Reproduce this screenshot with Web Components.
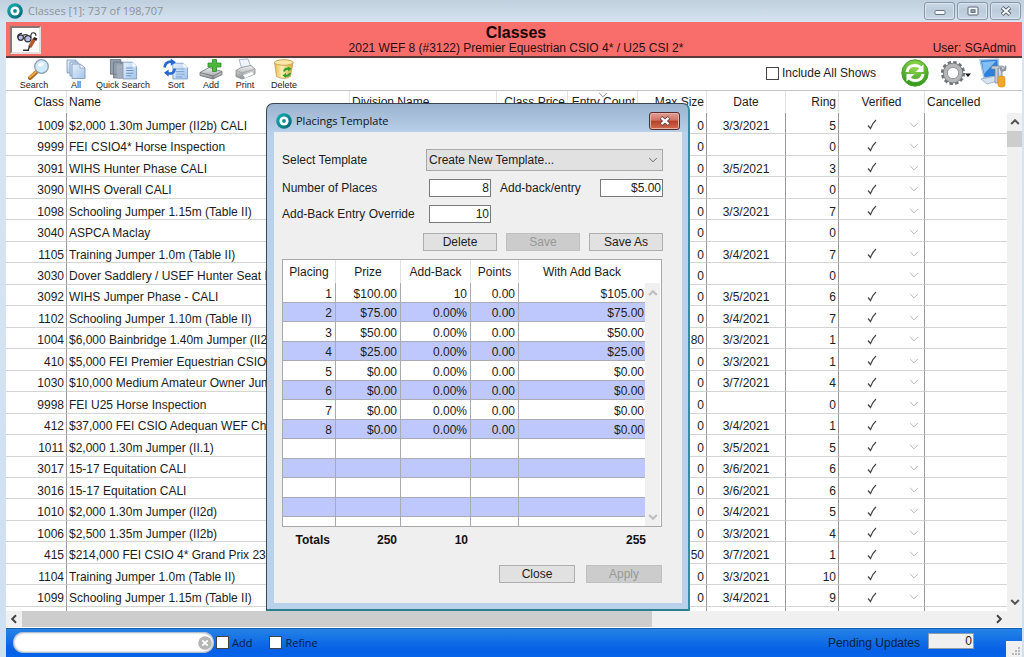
<!DOCTYPE html>
<html lang="en">
<head>
<meta charset="utf-8">
<title>Classes</title>
<style>
  html, body { margin: 0; height: 100%; }
  body { font: 12px/14px "Liberation Sans", Arial, sans-serif; color: #1c1c1c; overflow: hidden; }
</style>
</head>
<body>
<app-window>
  <title-bar slot="title">Classes [1]: 737 of 198,707</title-bar>
  <show-banner>
    <span slot="heading">Classes</span>
    <span slot="show">2021 WEF 8 (#3122) Premier Equestrian CSIO 4* / U25 CSI 2*</span>
    <span slot="user">User: SGAdmin</span>
  </show-banner>
  <tool-bar></tool-bar>
  <class-list></class-list>
  <status-bar></status-bar>
  <placings-dialog slot="dialog"></placings-dialog>
</app-window>

<script>
const define = (name, html, setup) => customElements.define(name, class extends HTMLElement {
  constructor() {
    super();
    const template = document.createElement('template');
    template.innerHTML = html;
    this.attachShadow({ mode: 'open' }).append(template.content.cloneNode(true));
    if (setup) setup(this.shadowRoot, this);
  }
});

define('app-logo', `
<style>:host { display: block; width: 16px; height: 16px; } svg { display: block; }</style>
<svg width="16" height="16" viewBox="0 0 16 16" aria-hidden="true">
  <defs><linearGradient id="g" x1="0" y1="0" x2="1" y2="1"><stop offset="0" stop-color="#12b3b3"/><stop offset="1" stop-color="#07606f"/></linearGradient></defs>
  <circle cx="8" cy="8" r="7.8" fill="url(#g)"/><circle cx="8" cy="8" r="4.6" fill="#fff"/><circle cx="8" cy="8" r="1.9" fill="#128d97"/>
</svg>`);

define('chevron-icon', `
<style>
  :host { display: inline-block; width: 10px; height: 6px; }
  :host([dir=up]) svg { transform: rotate(180deg); }
  :host([dir=left]) svg { transform: rotate(90deg); }
  :host([dir=right]) svg { transform: rotate(-90deg); }
  svg { display: block; }
  path { stroke-width: var(--w, 1); }
</style>
<svg width="10" height="6" viewBox="0 0 10 6" aria-hidden="true"><path d="M1.2 1 5 4.8 8.8 1" fill="none" stroke="currentColor"/></svg>`);

define('app-window', `
<style>
  :host { display: flex; flex-direction: column; height: 100vh; background: linear-gradient(#d9e5f1, #cfe0f2); }
  main { flex: 1; min-height: 0; display: flex; flex-direction: column; margin: 0 2px 0 6px; background: #fff; }
</style>
<slot name="title"></slot>
<main><slot></slot></main>
<slot name="dialog"></slot>`);

define('title-bar', `
<style>
  :host { display: flex; align-items: center; height: 22px; padding: 0 3px 0 7px; gap: 5px;
    background: linear-gradient(#c0cfdd, #d6e4f1); color: #8f9296; font: 12px/18px "Open Sans", "Noto Sans", sans-serif; box-sizing: border-box; }
  span { flex: 1; font-size: 11px; }
  nav { display: flex; gap: 2px; }
  button { width: 31px; height: 18px; padding: 0; display: grid; place-items: center; border: 1px solid #8795a5; border-radius: 3px;
    background: linear-gradient(#c9d7e5, #bccbda 50%, #c9d7e5); box-shadow: inset 0 0 0 1px #dbe6f0; }
</style>
<app-logo></app-logo><span><slot></slot></span>
<nav>
  <button aria-label="Minimize"><svg width="12" height="10" viewBox="0 0 12 10"><rect x="1" y="4.5" width="10" height="4" rx="1" fill="#f4f7fa" stroke="#6b7480"/></svg></button>
  <button aria-label="Restore"><svg width="12" height="10" viewBox="0 0 12 10"><rect x="1" y="1" width="10" height="8" rx="1" fill="#f4f7fa" stroke="#5c6570"/><rect x="4" y="3.8" width="4" height="2.6" fill="#9fb0c2" stroke="#5c6570"/></svg></button>
  <button aria-label="Close"><svg width="12" height="10" viewBox="0 0 12 10"><path d="M2 1.5 10 8.5M10 1.5 2 8.5" stroke="#5c6570" stroke-width="4"/><path d="M2.4 1.8 9.6 8.2M9.6 1.8 2.4 8.2" stroke="#f4f7fa" stroke-width="2"/></svg></button>
</nav>`);

define('show-banner', `
<style>
  :host { display: grid; grid-template-columns: 152px 1fr 148px; align-items: end; height: 36px; box-sizing: border-box;
    background: #f96e6b; border-bottom: 2px solid #5d3a3a; }
  .icon { width: 31px; height: 28px; margin: 0 0 2px 4px; box-sizing: border-box; padding: 0; border: 2px solid #8b7474; border-right-color: #e6dede; border-bottom-color: #e6dede; background: #fff; }
  .icon svg { display: block; }
  .mid { text-align: center; padding-bottom: 1px; color: #2a0d0d; }
  h1 { margin: 0; font: bold 16px/16px "Liberation Sans", Arial, sans-serif; color: #170404; }
  .user { text-align: right; padding: 0 6px 1px 0; color: #2a0d0d; }
</style>
<button class="icon" aria-label="Class details"><svg width="27" height="24" viewBox="2 1 22 20">
  <g fill="none" stroke="#333" stroke-width="1"><circle cx="9" cy="9" r="2.3" fill="#b9bfe6"/><circle cx="15" cy="10" r="2.6" fill="#b9bfe6"/><path d="M6.5 9Q6 6 10 5.5M11.500 9l1 .5M17.500 9Q17 4.500 20 5q2 .5 1.500 2.500M11 7q2-1 4 0"/></g>
  <path d="m20.500 10-4 7" stroke="#b5562e" stroke-width="3"/><path d="m21.500 9-.8 2" stroke="#222" stroke-width="3"/><path d="m16.500 16-1.300 3.500M11 19.500h5" stroke="#333" stroke-width="1.200"/>
</svg></button>
<div class="mid"><h1><slot name="heading"></slot></h1><slot name="show"></slot></div>
<div class="user"><slot name="user"></slot></div>`);

define('tool-button', `
<style>
  :host { display: block; }
  button { display: flex; flex-direction: column; align-items: center; width: 100%; border: 0; padding: 0; background: none; color: #222;
    font: 9px/10px "Liberation Sans", Arial, sans-serif; white-space: nowrap; }
</style>
<button><slot name="icon"></slot><span><slot></slot></span></button>`);

define('check-field', `
<style>
  :host { display: block; }
  label { display: flex; align-items: center; gap: var(--gap, 3px); }
  input { appearance: none; margin: 0; width: 13px; height: 13px; border: 1px solid #444; background: #fff; }
</style>
<label><input type="checkbox"><slot></slot></label>`);

define('tool-bar', `
<style>
  :host { display: flex; align-items: center; height: 33px; box-sizing: border-box; border-bottom: 1px solid #c4c4c4; background: #fff; }
  .tools { flex: 1; display: grid; grid-template-columns: 56px 28px 66px 40px 30px 38px 40px; align-self: start; }
  svg { display: block; }
  .right { display: flex; align-items: center; padding-right: 15px; margin-top: -2px; }
  .right button { border: 0; padding: 0; background: none; }
  check-field { margin-right: 25px; }
  .refresh { margin-right: 12px; }
  .gear { margin-right: 8px; }
</style>
<svg width="0" height="0" style="position:absolute"><defs>
  <linearGradient id="pg" x1="0" y1="0" x2="1" y2="1"><stop offset="0" stop-color="#e6f1fc"/><stop offset="1" stop-color="#a3c4ea"/></linearGradient>
  <linearGradient id="gr" x1="0" y1="0" x2="0" y2="1"><stop offset="0" stop-color="#f2f2f2"/><stop offset="1" stop-color="#8c9097"/></linearGradient>
  <linearGradient id="bin" x1="0" y1="0" x2="1" y2="0"><stop offset="0" stop-color="#e9b94a"/><stop offset=".4" stop-color="#fbeeb4"/><stop offset="1" stop-color="#dba93c"/></linearGradient>
</defs></svg>
<div class="tools">
  <tool-button><svg slot="icon" width="32" height="22" viewBox="0 0 32 21"><path d="m20 12-8 7.500" stroke="#a8691c" stroke-width="4" stroke-linecap="round"/><path d="m19.500 12-7.500 6.500" stroke="#eda844" stroke-width="2" stroke-linecap="round"/><circle cx="23.500" cy="8" r="6.800" fill="#cfeafb" stroke="#8d9fb1" stroke-width="1.300"/><path d="M19.500 7.500q1-3.500 5-3.500l2 1q-2 4-7 2.500Z" fill="#fff"/></svg>Search</tool-button>
  <tool-button><svg slot="icon" width="24" height="22" viewBox="0 0 24 21"><g fill="url(#pg)" stroke="#7790b5" stroke-width=".8"><path d="M3 1.500h9v13H3z"/><path d="M6 3.500h8v14H6z"/><path d="M8 5.500h8l5 4v10.500H8z"/></g><path d="m16 5.500 5 4h-5Z" fill="#fff" stroke="#7790b5" stroke-width=".6"/></svg>All</tool-button>
  <tool-button><svg slot="icon" width="32" height="22" viewBox="2 0 30 21"><g fill="#929eac" stroke="#6c7887" stroke-width=".8"><path d="M5 1.500h10v14H5zM8 4h9v15H8z"/></g><path d="M11 6h7v14h-7z" fill="#a3adba"/><path d="M17 4h9l4 4v12H17z" fill="url(#pg)" stroke="#7d95b6" stroke-width=".8"/><path d="m26 4 4 4h-4Z" fill="#fff"/><path d="M20 9.500h6M20 12h7M20 14.500h7M20 17h5" stroke="#6d93c4"/></svg>Quick Search</tool-button>
  <tool-button><svg slot="icon" width="32" height="22" viewBox="2 0 30 21"><path d="M14 5h10l4 4v11H14z" fill="url(#pg)" stroke="#7d9ac4" stroke-width=".8"/><path d="m24 5 4 4h-4Z" fill="#fff"/><path d="M17 10.500h8M17 13h8M17 15.500h8M17 18h6" stroke="#7fa6da"/><g fill="none" stroke="#2767d2" stroke-width="2.500"><path d="M6 9Q7 3 13 3.500M16 10q-1 6-7 4.500"/></g><path d="m12 .500 5 3.500-5 3.500ZM10 11v7l-4.500-4Z" fill="#2767d2"/></svg>Sort</tool-button>
  <tool-button><svg slot="icon" width="26" height="22" viewBox="0 0 26 21"><path d="m2 14 9-5 13 4v3l-9 4.500L2 17Z" fill="url(#gr)" stroke="#686c72" stroke-width=".8"/><path d="m2 14 13 3.500 9-4.500M15 17.500v3" fill="none" stroke="#686c72" stroke-width=".8"/><path d="M14.500 1h4v3.500H23v4h-4.500V13h-4V8.500H10v-4h4.500Z" fill="#4cb93c" stroke="#2e8a28" stroke-width=".8"/></svg>Add</tool-button>
  <tool-button><svg slot="icon" width="24" height="22" viewBox="0 0 24 21"><path d="m6 1 9-.5 3 8-9 2Z" fill="#edf4fb" stroke="#9aa6b4" stroke-width=".8"/><path d="m3 12 5-3 10-2 4 3.500v5L9 20.500 3 18Z" fill="url(#gr)" stroke="#85898f" stroke-width=".8"/><path d="m3 12 6 2.500 13-4M9 14.500v6" fill="none" stroke="#9b9fa5" stroke-width=".8"/><path d="m10 16.500 9-3 2 2-9 4Z" fill="#fff"/></svg>Print</tool-button>
  <tool-button><svg slot="icon" width="24" height="22" viewBox="0 0 24 21"><path d="m2.500 4 2 14q7 4 14 0l2.500-14Z" fill="url(#bin)" stroke="#c19a45" stroke-width=".7"/><ellipse cx="11.800" cy="4" rx="9.300" ry="2.800" fill="#f8e7a8" stroke="#cba44c"/><g fill="none" stroke="#2fa02c" stroke-width="2"><path d="M12 13q1-3.500 4.500-2.500M18 14.500q-1 3.500-4.500 2.500"/></g><path d="m15.500 8 4 2-3 3ZM14 14.500v5l-3.500-2.500Z" fill="#2fa02c"/></svg>Delete</tool-button>
</div>
<div class="right">
  <check-field>Include All Shows</check-field>
  <button class="refresh" aria-label="Refresh"><svg width="28" height="28" viewBox="0 0 28 28"><defs><radialGradient id="rf" cx=".5" cy=".25" r=".8"><stop offset="0" stop-color="#9cdc53"/><stop offset="1" stop-color="#259018"/></radialGradient></defs><circle cx="14" cy="14" r="13.200" fill="url(#rf)" stroke="#4da62d"/><g fill="none" stroke="#fff" stroke-width="3"><path d="M6 13q1-6.500 8-6.500 4 0 6 3M22 15q-1 6.500-8 6.500-4 0-6-3"/></g><path d="M22.500 5.500v7.500h-8ZM5.500 22.500V15h8Z" fill="#fff"/></svg></button>
  <button class="gear" aria-label="Settings"><svg width="30" height="28" viewBox="0 0 30 28"><circle cx="12" cy="14" r="10.800" fill="none" stroke="#6f7274" stroke-width="2.600" stroke-dasharray="3.400 2.250"/><circle cx="12" cy="14" r="7.800" fill="none" stroke="#77797b" stroke-width="5"/><circle cx="12" cy="14" r="7.600" fill="none" stroke="#b4b6b8" stroke-width="3.600"/><path d="M24 14.500h6l-3 3.500Z" fill="#111"/></svg></button>
  <button aria-label="Workstation tools"><svg width="28" height="30" viewBox="0 0 28 30"><path d="m1 2 18-1 1 17-15 2Z" fill="#2d7fdc" stroke="#a9c4de" stroke-width="1.500"/><path d="m3 4 14-1-12 13Z" fill="#82bdf3"/><path d="m2 21 15-3 5 4-14 4Z" fill="#d7e4f0" stroke="#92abc4" stroke-width=".8"/><path d="M13 8h11l2 3-2 1-2-2h-3v15h-3V11h-4Z" fill="#c7cdd4" stroke="#78828d" stroke-width=".7"/><path d="M22 9q-1 3 1 4l3-1q1-3 0-4" fill="none" stroke="#8d959f" stroke-width="2"/><rect x="19" y="18" width="7" height="11" rx="2.500" fill="#f1a62e" stroke="#d08619" stroke-width=".6"/><path d="M22.500 13v5" stroke="#9ba3ab" stroke-width="2"/></svg></button>
</div>`);

define('v-scroll', `
<style>
  :host { display: flex; flex-direction: column; align-items: center; background: #f0f0f0; color: #555; box-sizing: border-box; padding: 6px 0; }
  i { display: block; width: 100%; height: 16px; margin-top: 6px; background: #cdcdcd; }
  :host([idle]) i { visibility: hidden; }
  .sp { flex: 1; }
</style>
<chevron-icon dir="up"></chevron-icon><i></i><div class="sp"></div><chevron-icon></chevron-icon>`);

const classes = [
  [1009, '$2,000 1.30m Jumper (II2b) CALI', 0, '3/3/2021', 5, 1],
  [9999, 'FEI CSIO4* Horse Inspection', 0, '', 0, 1],
  [3091, 'WIHS Hunter Phase CALI', 0, '3/5/2021', 3, 1],
  [3090, 'WIHS Overall CALI', 0, '', 0, 1],
  [1098, 'Schooling Jumper 1.15m (Table II)', 0, '3/3/2021', 7, 1],
  [3040, 'ASPCA Maclay', 0, '', 0, 0],
  [1105, 'Training Jumper 1.0m (Table II)', 0, '3/4/2021', 7, 1],
  [3030, 'Dover Saddlery / USEF Hunter Seat M', 0, '', 0, 0],
  [3092, 'WIHS Jumper Phase - CALI', 0, '3/5/2021', 6, 1],
  [1102, 'Schooling Jumper 1.10m (Table II)', 0, '3/4/2021', 7, 1],
  [1004, '$6,000 Bainbridge 1.40m Jumper (II2', 80, '3/3/2021', 1, 1],
  [410, '$5,000 FEI Premier Equestrian CSIO', 0, '3/3/2021', 1, 1],
  [1030, '$10,000 Medium Amateur Owner Jum', 0, '3/7/2021', 4, 1],
  [9998, 'FEI U25 Horse Inspection', 0, '', 0, 1],
  [412, '$37,000 FEI CSIO Adequan WEF Cha', 0, '3/4/2021', 1, 1],
  [1011, '$2,000 1.30m Jumper (II.1)', 0, '3/5/2021', 5, 1],
  [3017, '15-17 Equitation CALI', 0, '3/6/2021', 6, 1],
  [3016, '15-17 Equitation CALI', 0, '3/6/2021', 6, 1],
  [1010, '$2,000 1.30m Jumper (II2d)', 0, '3/4/2021', 5, 1],
  [1006, '$2,500 1.35m Jumper (II2b)', 0, '3/3/2021', 4, 1],
  [415, '$214,000 FEI CSIO 4* Grand Prix 238', 50, '3/7/2021', 1, 1],
  [1104, 'Training Jumper 1.0m (Table II)', 0, '3/3/2021', 10, 1],
  [1099, 'Schooling Jumper 1.15m (Table II)', 0, '3/4/2021', 9, 1],
];

define('class-list', `
<style>
  :host { flex: 1; min-height: 0; display: grid; grid-template: 1fr 17px / 1fr 15px; }
  table { width: 100%; height: 100%; table-layout: fixed; border-collapse: separate; border-spacing: 0; }
  th, td { padding: 0 2px; overflow: hidden; white-space: nowrap; text-align: left; font-weight: normal; box-sizing: border-box; line-height: 14px; }
  th { height: 22px; border-right: 1px solid #e2e2e2; }
  td { padding-top: 5px; border-right: 1px solid #999; border-bottom: 1px solid #d4d4d4; }
  th:last-child, td:last-child { border-right: 0; }
  tfoot td { height: 4px; padding: 0; border-bottom: 0; }
  .r { text-align: right; } .c { text-align: center; }
  .v { display: flex; align-items: center; justify-content: flex-end; gap: 32px; padding-right: 3px; color: #b5b5b5; margin-top: -2px; }
  .sorted { position: relative; }
  .sorted chevron-icon { position: absolute; top: 1px; right: 29px; color: #888; }
  v-scroll { margin-top: 22px; --w: 2; }
  .h { grid-column: 1 / -1; display: flex; align-items: center; background: #f0f0f0; color: #444; --w: 2; margin-bottom: 1px; }
  .h chevron-icon { margin: 0 3px; }
  .h i { flex: none; width: 62%; height: 100%; background: #cdcdcd; }
  .h .sp { flex: 1; }
  .h chevron-icon:last-child { margin-right: 18px; }
</style>
<table>
  <colgroup><col style="width:61px"><col style="width:283px"><col><col style="width:71px"><col style="width:70px"><col style="width:69px"><col style="width:79px"><col style="width:53px"><col style="width:86px"><col style="width:82px"></colgroup>
  <thead><tr><th class="r">Class</th><th>Name</th><th>Division Name</th><th class="r">Class Price</th><th class="r sorted">Entry Count<chevron-icon></chevron-icon></th><th class="r">Max Size</th><th class="c">Date</th><th class="r">Ring</th><th class="c">Verified</th><th>Cancelled</th></tr></thead>
  <tbody></tbody>
  <tfoot><tr><td></td><td></td><td></td><td></td><td></td><td></td><td></td><td></td><td></td><td></td></tr></tfoot>
</table>
<v-scroll></v-scroll>
<div class="h"><chevron-icon dir="left"></chevron-icon><i></i><div class="sp"></div><chevron-icon dir="right"></chevron-icon></div>`,
root => {
  const tick = '<svg width="10" height="11" viewBox="0 0 10 11" role="img" aria-label="Yes"><path d="M1 6.500 3.500 9.500Q5.500 4 9 1" fill="none" stroke="#444" stroke-width="1.200"/></svg>';
  root.querySelector('tbody').innerHTML = classes.map(([no, name, size, date, ring, ok]) =>
    `<tr><td class="r">${no}</td><td>${name}</td><td></td><td></td><td></td><td class="r">${size}</td><td class="c">${date}</td><td class="r">${ring}</td><td><div class="v">${ok ? tick : ''}<chevron-icon></chevron-icon></div></td><td></td></tr>`).join('');
});

define('status-bar', `
<style>
  :host { display: flex; align-items: center; height: 29px; padding-left: 7px; background: linear-gradient(#2684e6, #0560e6 75%, #0464ea); color: #04203f;
    font: 12px/16px "Open Sans", "Noto Sans", sans-serif; box-shadow: inset 0 1px #1a60b0; }
  .search { display: flex; align-items: center; width: 201px; height: 21px; box-sizing: border-box; border-radius: 11px; background: #fff; padding: 0 2px 0 10px; box-shadow: inset 0 0 2px 1px #9ab; margin-right: 2px; }
  .search input { flex: 1; min-width: 0; border: 0; outline: 0; background: none; padding: 0; }
  .search button { border: 0; padding: 0; background: none; height: 14px; }
  svg { display: block; }
  check-field { margin-right: 17px; font-size: 11px; --gap: 3px; }
  .pending { margin-left: auto; display: flex; align-items: center; gap: 8px; font: 12px/14px "Liberation Sans", Arial, sans-serif; }
  .pending input { width: 46px; height: 16px; box-sizing: border-box; border: 1px solid #8c9cae; background: #f0f0f0; padding: 0 1px; text-align: right; font: inherit; color: #222; margin-bottom: 4px; }
  .grip { align-self: end; width: 16px; height: 16px; margin-left: 32px; background: #f0f0f0; }
</style>
<div class="search"><input type="text" aria-label="Search classes"><button aria-label="Clear"><svg width="14" height="14" viewBox="0 0 14 14"><circle cx="7" cy="7" r="6.800" fill="#b5b5b5"/><path d="m4.300 4.300 5.400 5.400m0-5.400L4.300 9.700" stroke="#fff" stroke-width="1.800"/></svg></button></div>
<check-field>Add</check-field><check-field>Refine</check-field>
<label class="pending">Pending Updates <input type="text" value="0" readonly></label>
<svg class="grip" viewBox="0 0 16 16" aria-hidden="true"><path d="M12 6h2v2h-2zM9 9h2v2H9zM12 9h2v2h-2zM6 12h2v2H6zM9 12h2v2H9zM12 12h2v2h-2z" fill="#b8b8b8"/></svg>`);

const placings = [
  ['$100.00', '10', '0.00', '$105.00'], ['$75.00', '0.00%', '0.00', '$75.00'],
  ['$50.00', '0.00%', '0.00', '$50.00'], ['$25.00', '0.00%', '0.00', '$25.00'],
  ['$0.00', '0.00%', '0.00', '$0.00'], ['$0.00', '0.00%', '0.00', '$0.00'],
  ['$0.00', '0.00%', '0.00', '$0.00'], ['$0.00', '0.00%', '0.00', '$0.00'],
];

define('placings-table', `
<style>
  :host { display: flex; height: 268px; box-sizing: border-box; border: 1px solid #a9a9a9; background: #fff; }
  table { flex: 1; height: 100%; table-layout: fixed; border-collapse: separate; border-spacing: 0; }
  th, td { box-sizing: border-box; padding: 0 3px; overflow: hidden; white-space: nowrap; line-height: 14px; }
  th { height: 23px; font-weight: normal; border-right: 1px solid #e2e2e2; }
  td { text-align: right; border-right: 1px solid #aaaab4; border-bottom: 1px solid #aaaab4; }
  td:last-child { padding-right: 1px; }
  th:last-child, td:last-child { border-right: 0; }
  tbody td { padding-top: 3px; }
  tbody tr:nth-child(even) td { background: #bfc8fd; }
  tfoot td { height: 9px; padding: 0; border-bottom: 0; }
  v-scroll { margin: 23px 1px 0 0; width: 15px; --w: 2; color: #bdbdbd; padding: 7px 0 6px; }
</style>
<table>
  <colgroup><col style="width:53px"><col style="width:65px"><col style="width:70px"><col style="width:48px"><col></colgroup>
  <thead><tr><th>Placing</th><th>Prize</th><th>Add-Back</th><th>Points</th><th>With Add Back</th></tr></thead>
  <tbody></tbody>
  <tfoot><tr><td></td><td></td><td></td><td></td><td></td></tr></tfoot>
</table>
<v-scroll idle></v-scroll>`,
root => {
  root.querySelector('tbody').innerHTML = Array.from({ length: 12 }, (_, i) => {
    const cells = placings[i] ? [i + 1, ...placings[i]] : Array(5).fill('&nbsp;');
    return `<tr>${cells.map(c => `<td>${c}</td>`).join('')}</tr>`;
  }).join('');
});

define('push-button', `
<style>
  :host { display: block; width: 74px; }
  button { display: block; width: 100%; height: 18px; box-sizing: border-box; padding: 0; border: 1px solid #adadad; background: #e1e1e1; color: #1c1c1c; font: 12px/14px "Liberation Sans", Arial, sans-serif; }
  button:disabled { background: #cccccc; border-color: #c0c0c0; color: #989898; }
</style>
<button><slot></slot></button>`,
(root, host) => { root.querySelector('button').disabled = host.hasAttribute('disabled'); });

define('placings-dialog', `
<style>
  :host { position: absolute; left: 266px; top: 103px; width: 424px; box-sizing: border-box; border: 1px solid #3c4650; border-right: 2px solid #2f8fa3; border-bottom: 2px solid #2c7f90;
    border-radius: 7px 7px 0 0; padding: 0 6px 6px 7px; background: linear-gradient(#9bb3ce, #b9d1ea 30px, #b9d1ea); }
  header { display: flex; align-items: center; gap: 4px; height: 28px; padding: 6px 2px 0; box-sizing: border-box; font: 12px/18px "Open Sans", "Noto Sans", sans-serif; }
  h2 { flex: 1; margin: 0; font: inherit; font-size: 11px; color: #111; }
  .x { width: 31px; height: 18px; padding: 0; display: grid; place-items: center; border: 1px solid #5b2a2a; border-radius: 3px;
    background: linear-gradient(#e0a093, #cf7466 45%, #b8402a 50%, #cf6b50); box-shadow: inset 0 0 0 1px #e5b2a8; }
  section { background: #efefef; padding: 17px 19px 20px 8px; }
  .form { display: grid; grid-template: 22px 18px 18px / 144px 3px 62px 9px 100px 63px; row-gap: 8px; align-items: center; }
  .form > * { box-sizing: border-box; }
  .form label { grid-column: 1 / 3; }
  .form .second { grid-column: 5; }
  .pick { grid-column: 2 / -1; height: 22px; position: relative; }
  .pick chevron-icon { position: absolute; right: 5px; top: 8px; color: #666; pointer-events: none; --w: 1; }
  select { appearance: none; width: 100%; height: 100%; border: 1px solid #a8a8a8; border-radius: 0; background: #e1e1e1; padding: 0 2px; font: inherit; color: inherit; }
  input { grid-column: 3; height: 18px; border: 1px solid #7a7a7a; background: #fff; padding: 0 1px; text-align: right; font: inherit; color: inherit; min-width: 0; width: 100%; }
  input.end { grid-column: 6; }
  .form label:first-child { grid-column: 1; }
  .actions { display: flex; justify-content: flex-end; gap: 9px; margin: 10px 0 8px; }
  placings-table { margin-right: 1px; }
  .totals { display: grid; grid-template-columns: 48px 67px 71px 178px; margin: 6px 0 18px; font-weight: bold; text-align: right; color: #111; }
  .foot { display: flex; justify-content: flex-end; gap: 11px; margin-right: 1px; }
  .foot push-button { width: 76px; }
</style>
<header><app-logo></app-logo><h2>Placings Template</h2>
  <button class="x" aria-label="Close dialog"><svg width="12" height="10" viewBox="0 0 12 10"><path d="M2 1.500 10 8.500M10 1.500 2 8.500" stroke="#6b3a3a" stroke-width="4"/><path d="M2.400 1.800 9.600 8.200M9.600 1.800 2.400 8.200" stroke="#fff" stroke-width="2.400"/></svg></button>
</header>
<section>
  <div class="form">
    <label for="template">Select Template</label>
    <div class="pick"><select id="template"><option>Create New Template...</option></select><chevron-icon></chevron-icon></div>
    <label for="places">Number of Places</label><input id="places" type="text" value="8">
    <label class="second" for="addback">Add-back/entry</label><input class="end" id="addback" type="text" value="$5.00">
    <label for="override">Add-Back Entry Override</label><input id="override" type="text" value="10">
  </div>
  <div class="actions"><push-button>Delete</push-button><push-button disabled>Save</push-button><push-button>Save As</push-button></div>
  <placings-table></placings-table>
  <div class="totals"><span>Totals</span><span>250</span><span>10</span><span>255</span></div>
  <div class="foot"><push-button>Close</push-button><push-button disabled>Apply</push-button></div>
</section>`);
</script>
</body>
</html>
